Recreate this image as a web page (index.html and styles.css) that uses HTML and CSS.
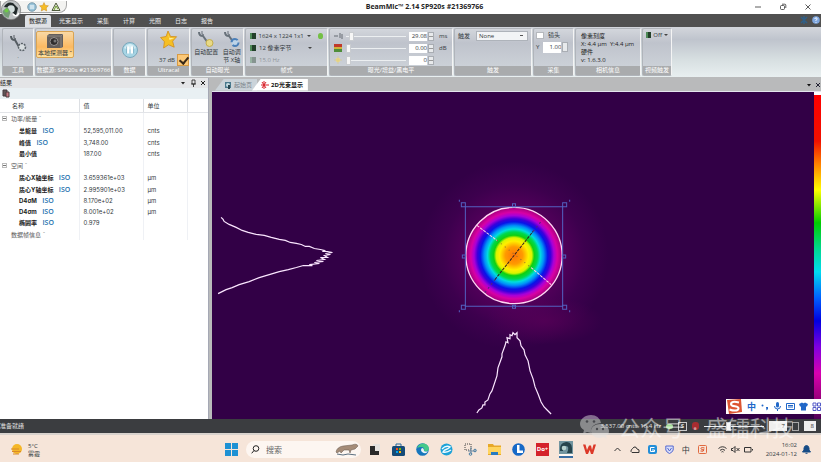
FILE: index.html
```html
<!DOCTYPE html>
<html lang="zh-CN">

<head>
  <meta charset="UTF-8">
  <meta name="viewport" content="width=device-width, initial-scale=1.0">
  <title>BeamMic</title>
  <link rel="stylesheet" href="styles.css">
</head>

<body>
  <header class="titlebar">
    <div class="quick">
      <svg width="10" height="10" viewBox="0 0 10 10"><circle cx="5" cy="5" r="4.2" fill="#9cc6dc" stroke="#7396a8"/><path d="M4 3v4M6 3v4" stroke="#fff"/></svg>
      <svg width="10" height="10" viewBox="0 0 10 10"><path d="M5 .6l1.3 2.8 3.1.4-2.2 2.1.5 3.1L5 7.500 2.300 9l.5-3.100L.6 3.800l3.100-.4z" fill="#f6bd25" stroke="#c8871a" stroke-width=".5"/></svg>
      <svg width="10" height="10" viewBox="0 0 10 10"><path d="M5 1l4 7.500H1z" fill="#e9eed8" stroke="#4f5b3c"/><path d="M3 8l2-4 2 3" stroke="#6a9b2d" fill="none"/></svg>
    </div>
    <h1>BeamMic™ 2.14 SP920s #21369766</h1>
    <div class="window-buttons">
      <button aria-label="最小化"><svg width="8" height="8" viewBox="0 0 8 8"><path d="M1 4h6"/></svg></button>
      <button aria-label="还原"><svg width="8" height="8" viewBox="0 0 8 8"><rect x="1.500" y="2.500" width="4" height="4" rx="1"/><path d="M3 1.200h2.800q1 0 1 1V5"/></svg></button>
      <button aria-label="关闭"><svg width="8" height="8" viewBox="0 0 8 8"><path d="M1.500 1.500l5 5M6.500 1.500l-5 5"/></svg></button>
    </div>
    <button class="orb" aria-label="应用菜单">
      <svg width="22" height="21" viewBox="0 0 22 21">
        <circle cx="11" cy="10" r="9.700" fill="#bfc3c4" stroke="#77797a" stroke-width=".7"/>
        <path d="M4 7q3-6 9-4l5 5-2 8-4-4-2-4z" fill="#222a2b"/>
        <circle cx="11" cy="9" r="3.800" fill="#d3dedd"/>
        <path d="M2.500 11l5-4 3 5-2 6q-5-1-6-7z" fill="#769c78"/>
        <circle cx="6.500" cy="10.500" r="2" fill="#6fca46"/>
        <path d="M13 14q3 4 6-1" stroke="#fff" stroke-width="1.500" fill="none"/>
      </svg>
    </button>
  </header>

  <nav class="tabs">
    <a class="tab active" href="#">数据源</a>
    <a class="tab" href="#">光束显示</a>
    <a class="tab" href="#">采集</a>
    <a class="tab" href="#">计算</a>
    <a class="tab" href="#">光圈</a>
    <a class="tab" href="#">日志</a>
    <a class="tab" href="#">报告</a>
    <span class="help">
      <svg width="8" height="8" viewBox="0 0 8 8"><path d="M1 1l6 6M7 1L1 7M4 0v8" stroke="#2f5f88" stroke-width="1.500"/></svg>
      <svg width="8" height="8" viewBox="0 0 8 8"><circle cx="4" cy="4" r="3.800" fill="#7fa7e0"/><path d="M2.800 3q.2-1.300 1.400-1.200 1.300.3.800 1.400L4 4.300V5M4 6v.8" stroke="#fff" fill="none"/></svg>
    </span>
  </nav>

  <section class="ribbon">
    <div class="group g-tools">
      <div class="panel">
        <button class="big" aria-label="工具">
          <svg width="18" height="20" viewBox="0 0 18 20"><path d="M2 3q0 4 4 4l4 7" stroke="#565d63" stroke-width="2" fill="none"/><path d="M5 2v3l2 1" stroke="#565d63" fill="none"/><circle cx="13" cy="14" r="3.500" fill="#d8dde0" stroke="#575f66" stroke-width="1.500" stroke-dasharray="2 1"/></svg>
          <span>·</span>
        </button>
      </div>
      <div class="name">工具</div>
    </div>

    <div class="group g-source">
      <div class="panel">
        <button class="big selected">
          <svg width="18" height="16" viewBox="0 0 18 16"><path d="M1 3l2-2h14v13l-2 1H1z" fill="#635e5b"/><path d="M1 3h14v12M15 3l2-2" stroke="#8b8580" fill="none"/><circle cx="8" cy="8.500" r="4" fill="#2f2d2d" stroke="#979391"/><circle cx="9" cy="8" r="1.500" fill="#777"/></svg>
          <span>本地探测器 ˇ</span>
        </button>
      </div>
      <div class="name">数据源: SP920s #21369766</div>
    </div>

    <div class="group g-data">
      <div class="panel center">
        <button class="big" aria-label="暂停">
          <svg width="18" height="18" viewBox="0 0 18 18"><circle cx="9" cy="9" r="7.500" fill="#a7d5e5" stroke="#7ba8bb"/><path d="M3 7q6-8 12 0-6 3-12 0z" fill="#d6eef5"/><path d="M7 5.500v7M11 5.500v7" stroke="#fff" stroke-width="2.400"/><path d="M5.600 5.500v7M12.600 5.500v7" stroke="#609bb3" stroke-width=".6"/></svg>
        </button>
      </div>
      <div class="name">数据</div>
    </div>

    <div class="group g-ultracal">
      <div class="panel">
        <svg width="20" height="22" viewBox="0 0 20 22"><path d="M9 2l2.600 5.500 6 .2-4 4.500 1.600 6-5.600-2.400-5 3.200.8-6.300L1.500 8.500l5.600-1z" fill="#f5bf24" stroke="#d18d1c" stroke-width=".8"/><path d="M9 4l1.500 5 5 0-5 2z" fill="#ffed92"/></svg>
        <label class="db">37 dB <input type="checkbox" class="gold" checked></label>
      </div>
      <div class="name">Ultracal</div>
    </div>

    <div class="group g-auto">
      <div class="panel row">
        <button class="big">
          <svg width="18" height="18" viewBox="0 0 18 18"><path d="M2 2q0 4 4 4l5 7" stroke="#68717a" stroke-width="2" fill="none"/><path d="M5 1v3l2 1" stroke="#68717a" fill="none"/><circle cx="12.500" cy="13" r="3.500" fill="#e8d986" stroke="#c2ac4c"/></svg>
          <span>自动配置</span>
        </button>
        <button class="big">
          <svg width="18" height="18" viewBox="0 0 18 18"><path d="M2 2q0 4 4 4l5 7" stroke="#68717a" stroke-width="2" fill="none"/><path d="M5 1v3l2 1" stroke="#68717a" fill="none"/><circle cx="12" cy="12.500" r="3.500" fill="#bcd3e8" stroke="#4a7fb8" stroke-width="2" stroke-dasharray="8 3"/></svg>
          <span>自动调<br>节 X轴</span>
        </button>
      </div>
      <div class="name">自动曝光</div>
    </div>

    <div class="group g-format">
      <div class="panel">
        <div class="line"><i class="chip"></i><span>1624 x 1224 1x1</span><i class="caret"></i><i class="go"></i></div>
        <div class="line"><i class="chip"></i><span>12 像素字节</span><i class="caret push"></i></div>
        <div class="line off"><i class="chip"></i><span>15.0 Hz</span></div>
      </div>
      <div class="name">帧式</div>
    </div>

    <div class="group g-exposure">
      <div class="panel">
        <div class="line">
          <svg width="9" height="8" viewBox="0 0 9 8"><path d="M0 4h2M3 3v2M6 1v5M8 2v5" stroke="#646b73"/></svg>
          <input type="range" aria-label="曝光" min="0" max="100" value="6">
          <span class="spin"><input type="text" aria-label="曝光值" value="29.08"><i></i></span><span>ms</span>
        </div>
        <div class="line">
          <svg width="9" height="8" viewBox="0 0 9 8"><path d="M0 0h8v3H0z" fill="#c0392b"/><path d="M0 3h8v2H0z" fill="#d0b33b"/><path d="M0 5h8v3H0z" fill="#4f8e3a"/></svg>
          <input type="range" aria-label="增益" min="0" max="100" value="0">
          <span class="spin"><input type="text" aria-label="增益值" value="0.00"><i></i></span><span>dB</span>
        </div>
        <div class="line">
          <svg width="9" height="8" viewBox="0 0 9 8"><circle cx="4" cy="4" r="2.300" fill="#ead98a"/><path d="M4 0v8M0 4h8" stroke="#dccb80" stroke-width=".6"/></svg>
          <input type="range" aria-label="黑电平" min="0" max="100" value="0">
          <span class="spin"><input type="text" aria-label="黑电平值" value="0"><i></i></span><span></span>
        </div>
      </div>
      <div class="name">曝光/增益/黑电平</div>
    </div>

    <div class="group g-trigger">
      <div class="panel">
        <div class="line"><label for="trigger">触发</label>
          <select id="trigger"><option>None</option></select></div>
      </div>
      <div class="name">触发</div>
    </div>

    <div class="group g-capture">
      <div class="panel">
        <label class="line lens"><input type="checkbox">镜头</label>
        <div class="line"><label for="scale">Y</label><span class="spin"><input type="text" id="scale" value="1.00"><i></i></span></div>
      </div>
      <div class="name">采集</div>
    </div>

    <div class="group g-camera">
      <div class="panel">
        <p>像素刻度</p>
        <p>X: 4.4 µm&nbsp; Y:4.4 µm</p>
        <p>硬件</p>
        <p>v: 1.6.3.0</p>
      </div>
      <div class="name">相机信息</div>
    </div>

    <div class="group g-video">
      <div class="panel">
        <div class="line"><i class="chip"></i><span>Off</span><i class="caret"></i></div>
      </div>
      <div class="name">视频触发</div>
    </div>
  </section>

  <main class="workspace">
    <aside class="results">
      <div class="dock-title">
        <span>结果</span>
        <svg width="27" height="8" viewBox="0 0 27 8"><path d="M1 3h4L3 5.500z" fill="#222"/><path d="M12 1h3v4h-3zM11 5h5M13.500 5v3" stroke="#222" fill="none" stroke-width=".8"/><path d="M21 2l4 4M25 2l-4 4" stroke="#222"/></svg>
      </div>
      <div class="dock-tools">
        <svg width="9" height="9" viewBox="0 0 9 9"><path d="M1 1h4v6H1z" fill="#605457" stroke="#463b3e"/><path d="M4 3h3v5H4z" fill="#c87883" stroke="#4a3a3d"/></svg>
      </div>
      <table>
        <thead>
          <tr><th>名称</th><th>值</th><th>单位</th><th></th></tr>
        </thead>
        <tbody>
          <tr class="section"><td><i class="fold"></i>功率/能量 ˇ</td><td></td><td></td><td></td></tr>
          <tr><td>总能量 <a href="#">ISO</a></td><td>52,595,011.00</td><td>cnts</td><td></td></tr>
          <tr><td>峰值 <a href="#">ISO</a></td><td>3,748.00</td><td>cnts</td><td></td></tr>
          <tr><td>最小值</td><td>187.00</td><td>cnts</td><td></td></tr>
          <tr class="section"><td><i class="fold"></i>空间 ˇ</td><td></td><td></td><td></td></tr>
          <tr><td>质心X轴坐标 <a href="#">ISO</a></td><td>3.659361e+03</td><td>µm</td><td></td></tr>
          <tr><td>质心Y轴坐标 <a href="#">ISO</a></td><td>2.995901e+03</td><td>µm</td><td></td></tr>
          <tr><td>D4σM <a href="#">ISO</a></td><td>8.170e+02</td><td>µm</td><td></td></tr>
          <tr><td>D4σm <a href="#">ISO</a></td><td>8.001e+02</td><td>µm</td><td></td></tr>
          <tr><td>椭圆率 <a href="#">ISO</a></td><td>0.979</td><td></td><td></td></tr>
          <tr class="section last"><td>数据帧信息 ˇ</td><td></td><td></td><td></td></tr>
        </tbody>
      </table>
    </aside>

    <section class="display">
      <div class="doc-tabs">
        <a class="doc" href="#"><svg width="8" height="8" viewBox="0 0 8 8"><path d="M1 1h6v6H1z" fill="#48788c"/><circle cx="4" cy="4" r="2" fill="#c3dbe2"/><path d="M4 4h2v4H4z" fill="#27454f"/></svg>起始页</a>
        <a class="doc current" href="#"><svg width="8" height="8" viewBox="0 0 8 8"><path d="M3 0v8M0 4h8M1 1l4 6M5 1L1 7" stroke="#d8232a"/></svg>2D光束显示</a>
        <svg class="doc-close" width="15" height="8" viewBox="0 0 15 8"><path d="M1 3h4L3 5.500z" fill="#111"/><path d="M10 2l4 4M14 2l-4 4" stroke="#223"/></svg>
      </div>
      <div class="plot-row">
        <svg class="plot" viewBox="0 0 602 326" preserveAspectRatio="xMidYMid slice">
          <defs>
            <radialGradient id="halo">
              <stop offset=".35" stop-color="#640060"/>
              <stop offset=".5" stop-color="#52005a"/>
              <stop offset=".75" stop-color="#3d004e"/>
              <stop offset="1" stop-color="#320046"/>
            </radialGradient>
            <radialGradient id="smudge">
              <stop offset="0" stop-color="#5a0058" stop-opacity=".7"/>
              <stop offset="1" stop-color="#5a0058" stop-opacity="0"/>
            </radialGradient>
            <radialGradient id="beam">
              <stop offset="0" stop-color="#ff7208"/>
              <stop offset=".18" stop-color="#ff9a00"/>
              <stop offset=".3" stop-color="#ffee00"/>
              <stop offset=".37" stop-color="#d8f400"/>
              <stop offset=".42" stop-color="#10cf10"/>
              <stop offset=".49" stop-color="#00d84e"/>
              <stop offset=".55" stop-color="#00dce0"/>
              <stop offset=".62" stop-color="#0090f8"/>
              <stop offset=".7" stop-color="#0814e8"/>
              <stop offset=".76" stop-color="#3a00dc"/>
              <stop offset=".83" stop-color="#a800d8"/>
              <stop offset=".9" stop-color="#d800a4"/>
              <stop offset="1" stop-color="#a4007c"/>
            </radialGradient>
          </defs>
          <rect width="602" height="326" fill="#320046"/>
          <circle cx="302" cy="163" r="94" fill="url(#halo)"/>
          <ellipse cx="332" cy="228" rx="58" ry="24" fill="url(#smudge)"/>
          <circle cx="302" cy="163" r="48" fill="url(#beam)" stroke="#ffd5f4" stroke-width="1.300"/>
          <path d="M265 133l20 15" stroke="#ffd0e8" stroke-dasharray="3 1"/>
          <path d="M285 148l34 27" stroke="#8a6b30" stroke-dasharray="1 4"/>
          <path d="M319 175l20 17" stroke="#ffd0e8" stroke-dasharray="3 1" fill="none"/>
          <path d="M283 187l38-48" stroke="#302020" stroke-dasharray="3 1"/>
          <path d="M273 200l10-13M321 139l8-10" stroke="#55207a" stroke-dasharray="2 3"/>
          <g fill="none" stroke="#5360c0">
            <path d="M253.500 114.500h97v99h-97z"/>
            <path d="M249.500 110.500h4v4h-4zM350.500 110.500h4v4h-4zM249.500 212.500h4v4h-4zM350.500 212.500h4v4h-4zM300.500 111.500h3v3h-3zM300.500 212.500h3v3h-3zM250.500 162.500h3v3h-3zM350.500 162.500h3v3h-3z"/>
            <path d="M247 108.500h1M357 108.500h1M247 218.500h1M357 218.500h1" stroke-width="2"/>
          </g>
          <g fill="none" stroke="#fbe6ff" stroke-width="1.200">
            <polyline points="10,125 12,127 13,129 18,132 25,135 31,138 37,140 45,142 53,143 60,145 68,147 74,148 79,150 85,151 90,152 94,154 98,154 103,156 109,157 113,158 111,159 116,159 121,160 114,161 119,162 113,163 116,165 109,165 113,167 105,168 112,169 103,170 108,171 98,172 101,173 92,173 85,175 77,177 68,179 58,182 48,185 38,189 28,192 21,195 15,197 11,199 7,201"/>
            <polyline points="265,320 267,317 270,315 271,312 273,312 273,309 276,307 278,301 280,298 285,283 286,275 290,264 290,261 293,253 294,249 296,250 295,245 298,246 298,242 300,243 301,240 303,242 305,240 305,245 308,248 309,253 312,257 313,262 316,268 318,278 321,286 323,294 326,301 329,309 332,314 335,317 339,321"/>
          </g>
        </svg>
        <div class="colorbar"></div>
      </div>
    </section>

    <div class="ime">
      <svg class="sogou" width="17" height="17" viewBox="0 0 17 17"><path d="M1 2l14-1 1 13-13 2z" fill="#dc5632"/><path d="M13 4.500Q5 2.500 5 6.200c0 3 8 1.300 7.500 4.300-.5 2.800-5 2.500-9 1" stroke="#fff" stroke-width="2" fill="none"/></svg>
      <span>中</span>
      <svg width="9" height="9" viewBox="0 0 9 9"><circle cx="2.500" cy="3.500" r="1"/><path d="M6 5h2v2L6.500 8.500z"/></svg>
      <svg width="9" height="9" viewBox="0 0 9 9"><rect x="3" y="0" width="3" height="5.500" rx="1.500"/><path d="M1.500 4q0 3 3 3t3-3M4.500 7v2" stroke="#2268c8" fill="none"/></svg>
      <svg width="9" height="9" viewBox="0 0 9 9"><path d="M.5 1.500h8v6h-8zM2 3.500h5M2 5h5" stroke="#2268c8" fill="none"/></svg>
      <svg width="9" height="9" viewBox="0 0 9 9"><path d="M0 2l3-1.500q1.500 1.500 3 0L9 2 8 4.500H7v4H2v-4H1z"/></svg>
      <svg width="9" height="9" viewBox="0 0 9 9"><path d="M1 1h3v3H1zM5.500 1h3v3h-3zM1 5.500h3v3H1zM5.500 5.500h3v3h-3z" stroke="#565cc8" fill="none"/></svg>
    </div>
  </main>

  <footer class="status">
    <span class="ready">准备就绪</span>
    <span class="readout">3,537.00 cnts&nbsp; 16.4 Hz</span>
    <i class="led"></i>
    <b class="s-mark">S</b>
    <i class="led red"></i>
    <input type="range" aria-label="缩放" min="0" max="100" value="40">
    <input type="text" aria-label="帧" value="7">
    <i class="knob"></i>
    <input type="text" aria-label="缓存" value="8">
  </footer>

  <div class="watermark">
    <svg width="30" height="26" viewBox="0 0 30 26"><path d="M11 1C5 1 0 5 0 10c0 3 2 5 4 6l-1 4 4-2 4 1q-1-9 10-10Q19 1 11 1z" fill="#d6d6d8"/><path d="M20 10c-5 0-9 3-9 7s4 7 9 7l4-1 3 2-1-3c2-1 3-3 3-5 0-4-4-7-9-7z" fill="#e4e4e4"/><g fill="#56565c"><circle cx="7" cy="7.500" r="1.300"/><circle cx="14" cy="7.500" r="1.300"/><circle cx="17" cy="15" r="1.200"/><circle cx="23" cy="15" r="1.200"/></g></svg>
    <span>公众号</span>
    <span>·</span>
    <span>盛镭科技</span>
  </div>

  <div class="taskbar">
    <div class="weather">
      <svg width="13" height="13" viewBox="0 0 13 13"><circle cx="7" cy="6" r="5" fill="#f5b728"/><path d="M1 6h8M2 8.500h9M3 11h6" stroke="#d8892a" stroke-width="1.200"/></svg>
      <span>5°C<br>雾霾</span>
    </div>
    <div class="apps">
      <svg width="13" height="13" viewBox="0 0 13 13"><path d="M0 0h6v6H0zM7 0h6v6H7zM0 7h6v6H0zM7 7h6v6H7z" fill="#1d91d4"/></svg>
      <label class="search">
        <svg width="9" height="9" viewBox="0 0 9 9"><circle cx="5" cy="3.500" r="2.800" fill="none" stroke="#222"/><path d="M3 5.500L.7 8.300" stroke="#222"/></svg>
        <input type="text" placeholder="搜索">
        <svg width="24" height="13" viewBox="0 0 24 13"><path d="M1 9Q2 4 8 3l9-1q5-2 6 1l-3 3-4 1-1 3-1-3-5 0-3 3-1-2-3 2z" fill="#a58c78" stroke="#62544b" stroke-width=".5"/><path d="M2 11l6 1 5-1 8 1" stroke="#5b6f80" fill="none"/></svg>
      </label>
      <svg width="13" height="13" viewBox="0 0 13 13"><path d="M5 1h7v8H5z" fill="#e5e2de"/><path d="M2 3h5v5h4v4H2z" fill="#292929"/></svg>
      <svg width="13" height="13" viewBox="0 0 13 13"><path d="M4 3V1h5v2" stroke="#286b9b" fill="none"/><rect y="3" width="13" height="10" rx="1.500" fill="#164b78"/><path d="M4 5h2v2H4z" fill="#f25022"/><path d="M7 5h2v2H7z" fill="#7fba00"/><path d="M4 8h2v2H4z" fill="#00a4ef"/><path d="M7 8h2v2H7z" fill="#ffb900"/></svg>
      <svg width="13" height="13" viewBox="0 0 13 13"><circle cx="6.500" cy="6.500" r="6.300" fill="#1676bd"/><path d="M1 5Q3 0 8 .5q5 1 5 5.500-1 3-5 2 1-4-3-4-2 0-4 1z" fill="#45c98a"/><path d="M6 5q2 0 2 3 2 1 4 0-2 4-6 1-2-2 0-4z" fill="#e8f5f5"/></svg>
      <svg width="13" height="13" viewBox="0 0 13 13"><circle cx="6.500" cy="6.500" r="6" fill="#1da2d8"/><path d="M2 6q4-4 8-2-2 2-4 2.500T3 9q4 1 8-2" stroke="#eefaff" fill="none" stroke-width="1.400"/></svg>
      <svg width="13" height="13" viewBox="0 0 13 13"><path d="M1 1h6v6H1z" fill="none" stroke="#444" stroke-dasharray="1 1"/><path d="M7 4v7M4 8h8" stroke="#6d89a1"/><circle cx="6.500" cy="11" r="1.300" fill="none" stroke="#4c80a5"/><circle cx="11" cy="7.500" r="1.300" fill="none" stroke="#4c80a5"/></svg>
      <svg width="13" height="13" viewBox="0 0 13 13"><path d="M0 1h5l1 1.500h7V12H0z" fill="#e7a829"/><path d="M0 4h13v7H0z" fill="#ffd45e"/><path d="M3 9h7v3H3z" fill="#267bc2"/></svg>
      <svg width="13" height="13" viewBox="0 0 13 13"><circle cx="6.500" cy="6.500" r="6.300" fill="#1769c7"/><path d="M5 2h2.500v5.500H11V10H5z" fill="#fff"/></svg>
      <span class="dict">Do+</span>
      <span class="running"><svg width="14" height="13" viewBox="0 0 14 13"><path d="M0 0h14v13H0z" fill="#7295a0"/><path d="M1 10Q0 2 7 1t6 11H8q3-7-1-7t-3 5z" fill="#26444d"/><circle cx="5" cy="7" r="2.300" fill="#b9d2cf"/></svg></span>
      <svg width="13" height="13" viewBox="0 0 13 13"><path d="M0 1.500h2.500L4 7l2-4.500h2L9 7l1.500-5.500H13L10 11H8L6.700 7 5 11H3z" fill="#dc3929"/></svg>
    </div>
    <div class="tray">
      <svg width="9" height="9" viewBox="0 0 9 9"><path d="M1.500 6l3-3 3 3"/></svg>
      <svg width="10" height="9" viewBox="0 0 10 9"><path d="M2 7.500q-2-1-.5-3Q3 3.500 4 2q2.500-.5 3 2 3 0 2 3.500z"/></svg>
      <svg width="9" height="9" viewBox="0 0 9 9"><rect width="9" height="9" rx="2" fill="#238ed8" stroke="none"/><path d="M6.500 2.500h-4v4h4V5H4" stroke="#fff"/></svg>
      <svg width="9" height="9" viewBox="0 0 9 9"><path d="M.8 1h7.400v4q-1 2.500-3.700 3.500Q1.800 7.500.8 5z" stroke="#5568d0" fill="#d8def8"/><path d="M2.500 3l2 3 2-3" stroke="#5568d0"/></svg>
      <span>中</span>
      <svg width="9" height="9" viewBox="0 0 9 9"><rect x=".5" y=".5" width="8" height="8" rx="1" stroke="#e06a40"/><path d="M6.500 3Q2.500 2 3 3.700t3 1Q6 7 2.500 6" stroke="#df552a"/></svg>
      <span class="sys">
        <svg width="9" height="9" viewBox="0 0 9 9"><path d="M.5 3.500q4-3.500 8 0M2 5.300q2.500-2 5 0M3.500 7q1-.8 2 0"/></svg>
        <svg width="9" height="9" viewBox="0 0 9 9"><path d="M.5 3.500H2l2-2v6l-2-2H.5zM5.500 3l3 3M8.500 3l-3 3"/></svg>
        <svg width="9" height="9" viewBox="0 0 9 9"><path d="M.5 2.500h6.500v4.500H.5zM8.500 4v1.500"/></svg>
      </span>
      <span class="clock">16:02<br>2024-01-12</span>
      <svg width="9" height="9" viewBox="0 0 9 9"><path d="M.5 7L2 5V3q.5-2.500 2.500-2.500T7 3v2l1.500 2zM3.500 8.300h2" fill="#174c86" stroke="#174c86"/></svg>
    </div>
  </div>
</body>

</html>
```

FILE: styles.css
```css
* {
  margin: 0;
  padding: 0;
  box-sizing: border-box;
}

:root {
  --dark: #505050;
  --plot: #320046;
  --text: #333a40;
  --blue: #1d6fae;
  --task: #f6e5d9;

  font-family: "Open Sans", "Noto Sans CJK SC", sans-serif;
}

body {
  display: flex;
  flex-direction: column;
  height: 100vh;
  overflow: hidden;
  position: relative;
  background: #fff;
  color: var(--text);
  font-size: 6px;
  line-height: 8px;
}

button,
input,
select {
  font: inherit;
  color: inherit;
  border: 0;
  background: none;
}

a {
  color: inherit;
  text-decoration: none;
}

svg {
  flex: none;
  display: block;
}

/* title bar */
.titlebar {
  display: grid;
  grid-template-columns: 1fr auto 1fr;
  align-items: center;
  height: 14px;
  position: relative;
}

.titlebar h1 {
  font-size: 7px;
  font-weight: bold;
  color: #222;
  padding-left: 28px;
}

.quick {
  display: flex;
  gap: 2px;
  align-items: center;
  justify-self: start;
  height: 12px;
  padding: 0 5px 0 26px;
  border: 1px solid #a7a7a7;
  border-top: 0;
  border-radius: 0 0 8px 0;
  background: #f3f3f1;
}

.orb {
  position: absolute;
  left: 0;
  top: 0;
  z-index: 2;
}

.window-buttons {
  display: flex;
  justify-content: flex-end;
  gap: 17px;
  padding-right: 9px;
}

.window-buttons svg {
  fill: none;
  stroke: #333;
  stroke-width: 0.8;
}

/* ribbon tabs */
.tabs {
  display: flex;
  align-items: flex-end;
  gap: 1px;
  height: 13px;
  padding-left: 25px;
  background: var(--dark);
  color: #eee;
}

.tab {
  padding: 2px 6px;
  margin-right: 1px;
}

.tab.active {
  padding: 2px 4px;
  background: #dfe1e5;
  color: #222;
  border-radius: 2px 2px 0 0;
}

.help {
  display: flex;
  gap: 4px;
  margin-left: auto;
  padding: 0 1px 3px 0;
}

/* ribbon */
.ribbon {
  display: flex;
  height: 50px;
  padding: 1px 0 1px 2px;
  gap: 1px;
  background: linear-gradient(#d3d6dc, #bfc4cd 25%, #d7dfe1 65%, #e8eff0);
}

.group {
  flex: none;
  display: flex;
  flex-direction: column;
  border: 1px solid #b0b4ba;
  border-right-color: #f4f4f4;
  border-radius: 2px;
  background: linear-gradient(#d3d6dc, #bfc3cc 30%, #d0d6dc);
}

.panel {
  flex: 1;
  display: flex;
  flex-direction: column;
  align-items: center;
  min-height: 0;
}

.panel.row {
  flex-direction: row;
  align-items: flex-start;
  justify-content: space-around;
}

.panel.center {
  justify-content: center;
}

.name {
  height: 9px;
  background: #a9abad;
  color: #fff;
  text-align: center;
  line-height: 9px;
  white-space: nowrap;
  overflow: hidden;
}

.g-tools { width: 32px; }
.g-source { width: 77px; }
.g-data { width: 33px; }
.g-ultracal { width: 43px; }
.g-auto { width: 53px; }
.g-format { width: 83px; }
.g-exposure { width: 124px; }
.g-trigger { width: 78px; }
.g-capture { width: 41px; }
.g-camera { width: 66px; }
.g-video { width: 30px; }

.big {
  display: flex;
  flex-direction: column;
  align-items: center;
  padding-top: 4px;
}

.row .big {
  padding-top: 1px;
}

.g-source .panel {
  align-items: flex-start;
}

.big.selected {
  margin: 2px 0 0;
  padding: 1px 1px 0;
  height: 27px;
  border: 1px solid #d9a453;
  border-radius: 2px;
  background: linear-gradient(#f9d9a5, #fbb961 60%, #ffe3a0);
}

.db {
  display: flex;
  align-items: center;
  gap: 2px;
  margin-top: 3px;
  align-self: flex-end;
}

input[type="checkbox"] {
  appearance: none;
  width: 8px;
  height: 7px;
  background: #fff;
  border: 1px solid #b5b8bd;
}

input.gold {
  width: 12px;
  height: 12px;
  border: 1px solid #d79b45;
  background: #fcc877;
}

input.gold::after {
  content: "";
  display: block;
  width: 4px;
  height: 7px;
  margin: 0 0 0 3px;
  border: solid #3a2a18;
  border-width: 0 2px 2px 0;
  transform: rotate(40deg);
}

.line {
  display: flex;
  align-items: center;
  align-self: stretch;
  gap: 4px;
  height: 12px;
  padding: 0 4px;
  white-space: nowrap;
}

.g-format .panel,
.g-exposure .panel,
.g-trigger .panel {
  padding-top: 1px;
}

.g-format .line {
  gap: 3px;
}

.line.off {
  opacity: 0.4;
}

.chip {
  width: 6px;
  height: 6px;
  background: #23402a;
  border-left: 2px solid #4f8a58;
}

.caret {
  border: 1px solid transparent;
  border-top-color: #444;
  border-width: 2px 2px 0;
}

.caret.push {
  margin-left: 14px;
}

.go {
  width: 6px;
  height: 6px;
  margin-left: 4px;
  border-radius: 50%;
  background: #74bf45;
}

.g-exposure .line {
  gap: 3px;
}

.g-exposure .line > span:last-child {
  width: 9px;
  margin-left: 2px;
}

input[type="range"] {
  appearance: none;
  flex: 1;
  min-width: 0;
  height: 10px;
}

input[type="range"]::-webkit-slider-runnable-track {
  height: 1px;
  background: #eceff1;
}

input[type="range"]::-webkit-slider-thumb {
  appearance: none;
  width: 5px;
  height: 9px;
  margin-top: -4px;
  background: #f6f6f6;
  border: 1px solid #c9ccd0;
}

.spin {
  display: flex;
  align-items: center;
  gap: 1px;
}

.spin input {
  width: 18px;
  height: 9px;
  background: #fff;
  text-align: right;
}

.spin i {
  width: 6px;
  height: 9px;
  border: 1px solid #a9adb3;
  background: linear-gradient(#e8eaec 45%, #999 45%, #999 55%, #e8eaec 55%);
}

.g-trigger .line {
  gap: 6px;
  padding: 0 3px;
}

select {
  appearance: none;
  flex: 1;
  height: 10px;
  padding: 0 2px;
  border: 1px solid #aeb3ba;
  background: conic-gradient(from 315deg at 50% 100%, #555 90deg, transparent 0) no-repeat right 3px center / 4px 2px #f2f4f6;
}

.lens input {
  margin: 0;
}

.g-capture .spin input {
  height: 11px;
}

.g-capture .spin i {
  height: 10px;
}

.g-capture .line {
  padding: 0 2px;
}

.g-camera .panel {
  align-items: flex-start;
  padding: 3px 0 0 5px;
}

.g-camera p {
  white-space: nowrap;
  color: #222;
}

.g-video .line {
  gap: 2px;
  padding: 0 3px;
}

/* workspace */
.workspace {
  flex: 1;
  display: flex;
  min-height: 0;
  position: relative;
  background: #b9babb;
}

.results {
  width: 209px;
  margin-right: 3px;
  margin-top: 1px;
  background: #fff;
  border-right: 1px solid #a5a8b4;
}

.dock-title {
  display: flex;
  justify-content: space-between;
  align-items: center;
  height: 10px;
  padding-right: 1px;
  background: #e4e5e7;
  color: #222;
}

.dock-tools {
  height: 11px;
  padding: 1px 2px;
  background: #e9f0f3;
}

table {
  width: 100%;
  border-collapse: collapse;
  table-layout: fixed;
  font-family: Inter, "Noto Sans CJK SC", sans-serif;
}

th,
td {
  height: 11px;
  line-height: 9px;
  padding: 0 4px;
  border-right: 1px solid #eff1f5;
  text-align: left;
  font-weight: normal;
  white-space: nowrap;
}

th {
  height: 13px;
  border-right-color: #dcdfe3;
  border-bottom: 1px solid #e2e4e8;
}

th:nth-child(1) {
  width: 79px;
  padding-left: 12px;
}

th:nth-child(2) {
  width: 64px;
}

th:nth-child(3) {
  width: 44px;
}

th:last-child,
td:last-child {
  border-right: 0;
}

td:first-child {
  padding: 0 0 0 19px;
  font-weight: bold;
  color: #222;
}

td a {
  margin-left: 4px;
  font-family: "Open Sans", sans-serif;
  font-size: 7px;
  font-weight: 600;
  color: var(--blue);
}

.section td {
  height: 12px;
}

.section td:first-child {
  padding-left: 2px;
  font-weight: normal;
  color: #555;
}

.section.last td:first-child {
  padding-left: 11px;
}

.section + tr td {
  height: 13px;
}

.fold {
  display: inline-block;
  width: 5px;
  height: 5px;
  margin-right: 4px;
  border: 1px solid #bbb;
  background: linear-gradient(#fff 33%, #777 33%, #777 66%, #fff 66%);
}

.display {
  flex: 1;
  display: flex;
  flex-direction: column;
  min-width: 0;
}

.doc-tabs {
  display: flex;
  align-items: center;
  height: 15px;
  padding: 2px 0 1px 3px;
  border-bottom: 1px solid #e4e4ee;
}

.doc {
  display: flex;
  align-items: center;
  gap: 2px;
  height: 12px;
  padding: 0 5px 0 9px;
  background: #cbd3d9;
  color: #7a838a;
  clip-path: polygon(9px 0, 100% 0, 100% 100%, 0 100%);
}

.doc.current {
  margin-left: -5px;
  background: #fff;
  color: #111;
  font-weight: bold;
}

.doc-close {
  margin-left: auto;
}

.plot-row {
  flex: 1;
  display: flex;
  min-height: 0;
}

.plot {
  flex: 1;
  min-width: 0;
  height: 100%;
  background: var(--plot);
}

.colorbar {
  width: 7px;
  background: linear-gradient(#fff 3px, #f00 3px, #f01000 15%, #ff8000 22%, #ff0 30%, #0c0 40%, #00d890 48%, #00dcf0 55%, #0060ff 63%, #0000e0 70%, #8000e0 78%, #d800b0 86%, #a00080 93%, #500058);
}

/* floating input method bar */
.ime {
  position: absolute;
  right: 0;
  bottom: 5px;
  display: flex;
  align-items: center;
  gap: 4px;
  height: 15px;
  background: #fff;
  color: #2268c8;
  fill: #2268c8;
  font-size: 9px;
  font-weight: bold;
}

/* status bar */
.status {
  display: flex;
  align-items: center;
  gap: 5px;
  height: 14px;
  padding-right: 5px;
  background: #3b3d40;
  color: #e2e2e2;
}

.ready {
  margin-right: auto;
}

.status input[type="range"] {
  flex: none;
  width: 60px;
}

.status input[type="text"] {
  width: 18px;
  height: 10px;
  padding-right: 2px;
  background: #eee;
  color: #333;
  text-align: right;
}

.status input[type="text"]:last-child {
  width: 12px;
}

.led {
  width: 7px;
  height: 5px;
  border-radius: 3px;
  background: #a2dc96;
}

.led.red {
  height: 8px;
  background: #a82c30;
}

.s-mark {
  width: 9px;
  border: 1px solid #ccc;
  line-height: 7px;
  text-align: center;
}

.knob {
  width: 7px;
  height: 9px;
  border: 1px solid #aaa;
}

.watermark {
  position: absolute;
  right: 27px;
  bottom: 22px;
  z-index: 3;
  display: flex;
  align-items: center;
  gap: 8px;
  font-size: 22px;
  line-height: 22px;
  color: #fff;
  opacity: 0.5;
  pointer-events: none;
}

/* taskbar */
.taskbar {
  display: flex;
  align-items: center;
  height: 29px;
  padding: 2px 10px 0;
  border-top: 2px solid #d8d2cd;
  background: var(--task);
}

.weather,
.tray {
  flex: 1;
  display: flex;
  align-items: center;
}

.weather {
  gap: 5px;
}

.apps {
  display: flex;
  align-items: center;
  gap: 11px;
}

.search {
  display: flex;
  align-items: center;
  gap: 6px;
  width: 115px;
  height: 17px;
  margin: 0 -4px 0 -3px;
  padding: 0 2px 0 5px;
  border-radius: 9px;
  background: #fdf6f1;
  font-size: 8px;
}

.search input {
  flex: 1;
  min-width: 0;
}

.search input::placeholder {
  color: #666;
}

.dict {
  width: 13px;
  height: 13px;
  background: #d4222a;
  color: #fff;
  font-weight: bold;
  line-height: 13px;
  text-align: center;
}

.running {
  margin: 0 -1px;
  padding-bottom: 2px;
  border-bottom: 2px solid #3a6fa5;
  background: #fff8f3;
}

.tray {
  justify-content: flex-end;
  gap: 8px;
  fill: none;
  stroke: #333;
}

.tray span {
  stroke: none;
}

.tray .sys {
  display: flex;
  gap: 4px;
  stroke: #333;
  margin-left: 3px;
}

.tray > span {
  font-size: 8px;
}

.tray .clock {
  font-size: 6px;
  line-height: 9px;
  text-align: right;
  margin: 0 -3px 0 5px;
}
```
